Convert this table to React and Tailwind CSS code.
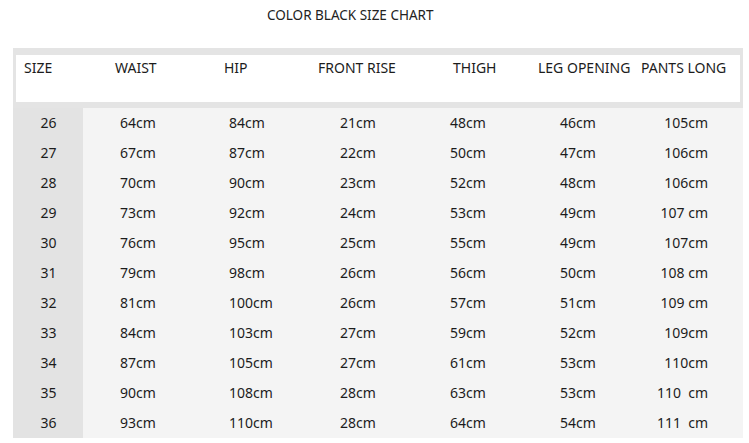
import React from "react";

const rows = [
    ["26", "64cm", "84cm", "21cm", "48cm", "46cm", "105cm"],
    ["27", "67cm", "87cm", "22cm", "50cm", "47cm", "106cm"],
    ["28", "70cm", "90cm", "23cm", "52cm", "48cm", "106cm"],
    ["29", "73cm", "92cm", "24cm", "53cm", "49cm", "107 cm"],
    ["30", "76cm", "95cm", "25cm", "55cm", "49cm", "107cm"],
    ["31", "79cm", "98cm", "26cm", "56cm", "50cm", "108 cm"],
    ["32", "81cm", "100cm", "26cm", "57cm", "51cm", "109 cm"],
    ["33", "84cm", "103cm", "27cm", "59cm", "52cm", "109cm"],
    ["34", "87cm", "105cm", "27cm", "61cm", "53cm", "110cm"],
    ["35", "90cm", "108cm", "28cm", "63cm", "53cm", "110  cm"],
    ["36", "93cm", "110cm", "28cm", "64cm", "54cm", "111  cm"],
];

const App = () => {
    return (
        <div
            className="w-[749px] h-[443px] bg-white text-[#1c1c1c] overflow-hidden"
            style={{ fontFamily: '"Noto Sans", "Open Sans", sans-serif' }}
        >
            <div className="h-[48px] pl-[267px] pt-[5px] text-[13.5px] leading-[20px] text-[#222]">
                COLOR BLACK SIZE CHART
            </div>

            <div className="ml-[13px] w-[730px] bg-[#e4e4e4]">
                <div className="pt-[7px] pb-[6px] px-[3px]">
                    <div className="bg-white h-[47px] pt-[4px] grid grid-cols-[67px_117px_100px_125px_95px_110px_110px] text-[14px] leading-[18px]">
                        <div className="pl-[8px]">SIZE</div>
                        <div className="pl-[32px]">WAIST</div>
                        <div className="pl-[24px]">HIP</div>
                        <div className="pl-[18px]">FRONT RISE</div>
                        <div className="pl-[28px]">THIGH</div>
                        <div className="pl-[18px] whitespace-nowrap">LEG OPENING</div>
                        <div className="pl-[11px] whitespace-nowrap">PANTS LONG</div>
                    </div>
                </div>

                <div className="bg-[#f4f4f4]">
                    {rows.map((r) => (
                        <div
                            key={r[0]}
                            className="grid grid-cols-[70px_117px_100px_125px_95px_110px_113px] h-[30px] items-center text-[14px] leading-[18px]"
                        >
                            <div className="bg-[#e3e3e3] h-full flex items-center justify-center pl-[1px]">{r[0]}</div>
                            <div className="pl-[37px]">{r[1]}</div>
                            <div className="pl-[29px]">{r[2]}</div>
                            <div className="pl-[40px]">{r[3]}</div>
                            <div className="pl-[25px]">{r[4]}</div>
                            <div className="pl-[40px]">{r[5]}</div>
                            <div className="pr-[35px] text-right whitespace-pre">{r[6]}</div>
                        </div>
                    ))}
                </div>
            </div>
        </div>
    );
};

export default App;
